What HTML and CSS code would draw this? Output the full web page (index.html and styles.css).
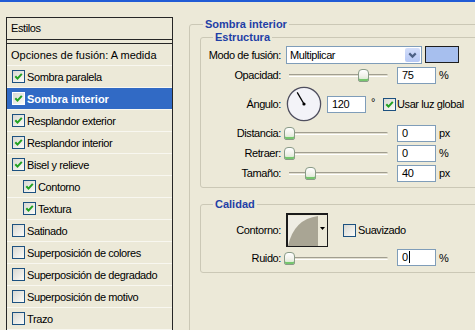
FILE: index.html
```html
<!DOCTYPE html>
<html lang="es">
<head>
    <meta charset="UTF-8">
    <title>Estilo de capa</title>
    <link rel="stylesheet" href="styles.css">
</head>
<body>

    <div class="titlebar"></div>

    <div class="dialog">

        <!-- Lista de estilos -->
        <div class="styles-panel">
            <div class="styles-head">Estilos</div>
            <ul class="styles-list">
                <li class="row plain">Opciones de fusión: A medida</li>
                <li class="row"><span class="cb"><svg viewBox="0 0 11 11"><path d="M2.3 5.2 L4.5 7.6 L8.8 2.8"/></svg></span>Sombra paralela</li>
                <li class="row selected"><span class="cb"><svg viewBox="0 0 11 11"><path d="M2.3 5.2 L4.5 7.6 L8.8 2.8"/></svg></span>Sombra interior</li>
                <li class="row"><span class="cb"><svg viewBox="0 0 11 11"><path d="M2.3 5.2 L4.5 7.6 L8.8 2.8"/></svg></span>Resplandor exterior</li>
                <li class="row"><span class="cb"><svg viewBox="0 0 11 11"><path d="M2.3 5.2 L4.5 7.6 L8.8 2.8"/></svg></span>Resplandor interior</li>
                <li class="row"><span class="cb"><svg viewBox="0 0 11 11"><path d="M2.3 5.2 L4.5 7.6 L8.8 2.8"/></svg></span>Bisel y relieve</li>
                <li class="row sub"><span class="cb"><svg viewBox="0 0 11 11"><path d="M2.3 5.2 L4.5 7.6 L8.8 2.8"/></svg></span>Contorno</li>
                <li class="row sub"><span class="cb"><svg viewBox="0 0 11 11"><path d="M2.3 5.2 L4.5 7.6 L8.8 2.8"/></svg></span>Textura</li>
                <li class="row"><span class="cb"></span>Satinado</li>
                <li class="row"><span class="cb"></span>Superposición de colores</li>
                <li class="row"><span class="cb"></span>Superposición de degradado</li>
                <li class="row"><span class="cb"></span>Superposición de motivo</li>
                <li class="row"><span class="cb"></span>Trazo</li>
            </ul>
        </div>

        <!-- Ajustes -->
        <div class="settings">
            <fieldset class="group outer">
                <legend>Sombra interior</legend>

                <fieldset class="group inner">
                    <legend>Estructura</legend>

                    <div class="field first">
                        <label>Modo de fusión:</label>
                        <div class="select">
                            <span class="select-text">Multiplicar</span>
                            <span class="select-btn"><svg viewBox="0 0 13 13"><path d="M3.5 5 L6.5 8 L9.5 5"/></svg></span>
                        </div>
                        <div class="swatch"></div>
                    </div>

                    <div class="field">
                        <label>Opacidad:</label>
                        <div class="slider"><span class="thumb" style="left: 72px"></span></div>
                        <div class="num">75</div>
                        <span class="unit">%</span>
                    </div>

                    <div class="field tall">
                        <label>Ángulo:</label>
                        <svg class="dial" width="36" height="36" viewBox="0 0 36 36">
                            <circle cx="18" cy="18" r="16.6" fill="#f3f3f8" stroke="#4f4f5f" stroke-width="1.3"/>
                            <line x1="18" y1="18" x2="11.2" y2="6.4" stroke="#000" stroke-width="1.3"/>
                            <circle cx="18" cy="18" r="1.6" fill="#000"/>
                        </svg>
                        <div class="num angle">120</div>
                        <span class="deg">°</span>
                        <span class="cb global"><svg viewBox="0 0 11 11"><path d="M2.3 5.2 L4.5 7.6 L8.8 2.8"/></svg></span>
                        <span>Usar luz global</span>
                    </div>

                    <div class="field">
                        <label>Distancia:</label>
                        <div class="slider"><span class="thumb" style="left: -2px"></span></div>
                        <div class="num">0</div>
                        <span class="unit">px</span>
                    </div>

                    <div class="field">
                        <label>Retraer:</label>
                        <div class="slider"><span class="thumb" style="left: -2px"></span></div>
                        <div class="num">0</div>
                        <span class="unit">%</span>
                    </div>

                    <div class="field">
                        <label>Tamaño:</label>
                        <div class="slider"><span class="thumb" style="left: 19px"></span></div>
                        <div class="num">40</div>
                        <span class="unit">px</span>
                    </div>
                </fieldset>

                <fieldset class="group quality">
                    <legend>Calidad</legend>

                    <div class="field contour-row">
                        <label>Contorno:</label>
                        <div class="contour">
                            <svg width="30" height="30" viewBox="0 0 30 30">
                                <rect width="30" height="30" fill="#efede4"/>
                                <path d="M0 30 Q6 3 30 0 L30 30 Z" fill="#a9a594"/>
                            </svg>
                            <span class="contour-arrow"><svg viewBox="0 0 7 4"><path d="M0 0 H7 L3.5 4 Z"/></svg></span>
                        </div>
                        <span class="cb smooth"></span>
                        <span>Suavizado</span>
                    </div>

                    <div class="field short">
                        <label>Ruido:</label>
                        <div class="slider"><span class="thumb" style="left: -2px"></span></div>
                        <div class="num">0<span class="caret"></span></div>
                        <span class="unit">%</span>
                    </div>
                </fieldset>
            </fieldset>
        </div>

    </div>

</body>
</html>
```

FILE: styles.css
```css
body {
    margin: 0;
    width: 475px;
    height: 330px;
    overflow: hidden;
    background: #ece9d8;
    font: 11px "Liberation Sans", Arial, sans-serif;
    letter-spacing: -0.4px;
    color: #000;
}

.titlebar {
    height: 2px;
    background: #215bd5;
}

.dialog {
    display: flex;
    align-items: flex-start;
    padding: 15px 0 0 6px;
}

/* Lista de estilos */
.styles-panel {
    flex: none;
    width: 165px;
    height: 400px;
    border: 1px solid #262626;
}

.styles-head {
    height: 21px;
    line-height: 21px;
    padding-left: 4px;
    border-bottom: 1px solid #262626;
}

.styles-list {
    list-style: none;
    margin: 3px 0 0;
    padding: 0;
    border-top: 1px solid #262626;
}

.row {
    display: flex;
    align-items: center;
    height: 21px;
    padding-left: 5px;
    border-bottom: 1px solid #f8f7f0;
}

.row.plain {
    padding-left: 4px;
    letter-spacing: 0;
}

.row.sub {
    padding-left: 16px;
}

.row.selected {
    background: #316ac5;
    color: #fff;
    font-weight: bold;
    letter-spacing: 0;
}

.row.selected .cb {
    border-color: #fff;
}

/* Casillas */
.cb {
    flex: none;
    display: inline-flex;
    width: 13px;
    height: 13px;
    box-sizing: border-box;
    margin-right: 2px;
    border: 1px solid #1c5180;
    background: linear-gradient(135deg, #d8d8d2, #fbfbf8);
}

.cb svg {
    width: 11px;
    height: 11px;
}

.cb path {
    fill: none;
    stroke: #21a121;
    stroke-width: 2;
}

/* Ajustes */
.settings {
    flex: none;
    margin: 1px 0 0 16px;
}

.group {
    margin: 0;
    padding: 0;
    border: 1px solid #cbc8b6;
    border-radius: 3px;
    min-width: 0;
}

.group legend {
    padding: 0 2px;
    margin-left: 12px;
    line-height: 13px;
    color: #1f3fa6;
    font-weight: bold;
    letter-spacing: 0;
}

.outer {
    width: 320px;
    padding: 0 0 120px 10px;
}

.outer > legend {
    margin-left: 3px;
}

.inner {
    padding-bottom: 4px;
}

.quality {
    margin-top: 10px;
    padding-bottom: 6px;
}

.field {
    display: flex;
    align-items: center;
    height: 20px;
}

.field.first {
    height: 21px;
}

.field.tall {
    height: 38px;
}

.field.contour-row {
    height: 38px;
}

.field.short {
    height: 17px;
}

.field label {
    flex: none;
    width: 80px;
    margin-right: 5px;
    text-align: right;
}

.select {
    display: flex;
    align-items: center;
    width: 136px;
    height: 18px;
    box-sizing: border-box;
    border: 1px solid #7f9db9;
    background: #fff;
}

.select-text {
    flex: 1;
    padding-left: 3px;
}

.select-btn {
    display: flex;
    width: 15px;
    height: 14px;
    margin-right: 1px;
    border-radius: 2px;
    background: linear-gradient(#d3defa, #b6c8f4);
}

.select-btn svg {
    width: 15px;
    height: 14px;
}

.select-btn path {
    fill: none;
    stroke: #4d6185;
    stroke-width: 2;
}

.swatch {
    width: 34px;
    height: 17px;
    box-sizing: border-box;
    margin-left: 3px;
    border: 1px solid #1e1e1e;
    background: #a7bfee;
}

.slider {
    position: relative;
    flex: none;
    width: 104px;
    height: 14px;
}

.slider::before {
    content: "";
    position: absolute;
    left: 3px;
    right: 2px;
    top: 6px;
    height: 3px;
    border-radius: 0 2px 2px 0;
    background: linear-gradient(#a19e90 0 1px, #e2dfd0 1px 2px, #fff 2px);
}

.thumb {
    position: absolute;
    top: 1px;
    width: 9px;
    height: 11px;
    border: 1px solid #8a9c88;
    border-radius: 4px 4px 2px 2px;
    background: linear-gradient(#ffffff, #f1f1ea 55%, #cfe8c8);
    box-shadow: inset 0 -2px #76c66e;
}

.num {
    flex: none;
    width: 39px;
    height: 17px;
    box-sizing: border-box;
    margin-left: 7px;
    padding-left: 4px;
    line-height: 15px;
    border: 1px solid #7f9db9;
    background: #fff;
}

.num.angle {
    margin-left: 5px;
}

.caret {
    display: inline-block;
    width: 1px;
    height: 12px;
    margin-left: 1px;
    vertical-align: -2px;
    background: #000;
}

.unit {
    margin-left: 3px;
}

.deg {
    margin-left: 5px;
    align-self: flex-start;
    margin-top: 11px;
}

.cb.global {
    margin-left: 8px;
    margin-right: 1px;
}

.contour {
    flex: none;
    display: flex;
    align-items: center;
    width: 42px;
    height: 34px;
    box-sizing: border-box;
    border: 1px solid #1b1b1b;
    border-left-width: 2px;
    border-top-width: 2px;
    background: #ece9d8;
}

.contour svg {
    display: block;
}

.contour-arrow {
    display: flex;
    flex: 1;
    justify-content: center;
    padding-bottom: 4px;
}

.contour-arrow svg {
    width: 5px;
    height: 3px;
}

.cb.smooth {
    margin-left: 15px;
    margin-right: 2px;
}
```
